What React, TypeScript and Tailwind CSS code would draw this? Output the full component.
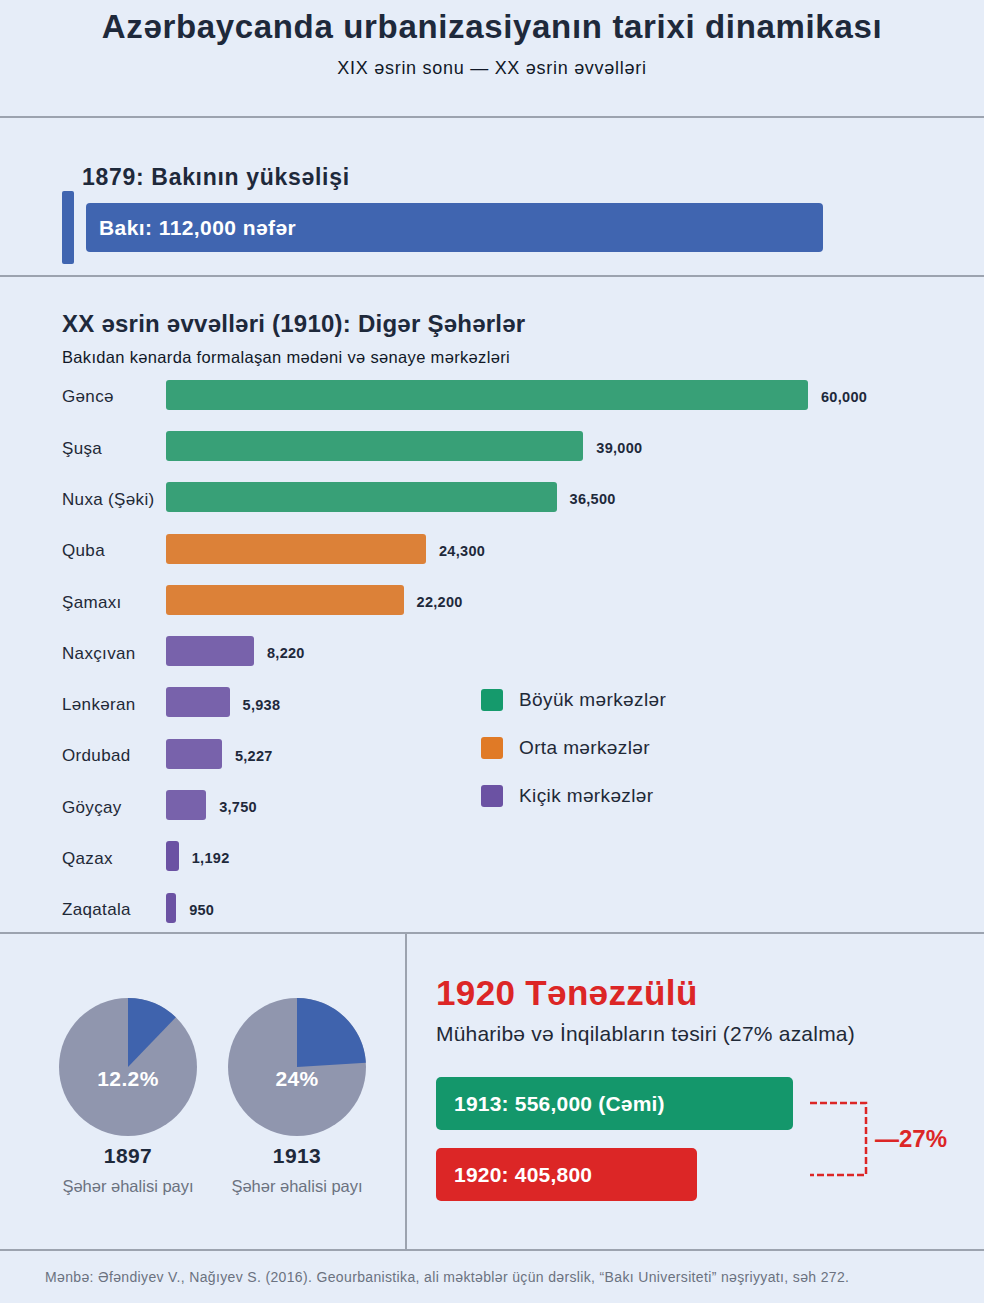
import React from "react";

const cities = [
  { name: "Gəncə", v: 60000, label: "60,000", c: "bg-[#38a077]" },
  { name: "Şuşa", v: 39000, label: "39,000", c: "bg-[#38a077]" },
  { name: "Nuxa (Şəki)", v: 36500, label: "36,500", c: "bg-[#38a077]" },
  { name: "Quba", v: 24300, label: "24,300", c: "bg-[#dc8138]" },
  { name: "Şamaxı", v: 22200, label: "22,200", c: "bg-[#dc8138]" },
  { name: "Naxçıvan", v: 8220, label: "8,220", c: "bg-[#7862ab]" },
  { name: "Lənkəran", v: 5938, label: "5,938", c: "bg-[#7862ab]" },
  { name: "Ordubad", v: 5227, label: "5,227", c: "bg-[#7862ab]" },
  { name: "Göyçay", v: 3750, label: "3,750", c: "bg-[#7862ab]" },
  { name: "Qazax", v: 1192, label: "1,192", c: "bg-[#6b52a3]" },
  { name: "Zaqatala", v: 950, label: "950", c: "bg-[#6b52a3]" },
];

function Pie({ pct, label }: { pct: number; label: string }) {
  const r = 69;
  const a = (pct / 100) * Math.PI * 2;
  const x = r + r * Math.sin(a);
  const y = r - r * Math.cos(a);
  const large = pct > 50 ? 1 : 0;
  return (
    <svg width="138" height="138" viewBox="0 0 138 138">
      <circle cx="69" cy="69" r="69" fill="#9096ae" />
      <path d={`M69 69 L69 0 A69 69 0 ${large} 1 ${x} ${y} Z`} fill="#3f63ad" />
      <text
        x="69"
        y="82"
        textAnchor="middle"
        dominantBaseline="middle"
        fill="#ffffff"
        fontSize="21"
        fontWeight="700"
        letterSpacing="0.4"
        fontFamily="Liberation Sans, Arial, sans-serif"
      >
        {label}
      </text>
    </svg>
  );
}

export default function App() {
  return (
    <div className="w-[984px] min-h-[1303px] bg-[#e6edf8] text-[#1e293b] font-['Liberation_Sans',Arial,sans-serif]">
      {/* Header */}
      <header className="h-[118px] border-b-2 border-[#9ca3af] pt-2 flex flex-col items-center">
        <h1 className="text-[33px] leading-[38px] tracking-[0.02em] font-bold text-[#1e293b]">
          Azərbaycanda urbanizasiyanın tarixi dinamikası
        </h1>
        <p className="mt-[11px] text-[18px] leading-[22px] tracking-[0.04em] text-[#111827]">
          XIX əsrin sonu — XX əsrin əvvəlləri
        </p>
      </header>

      {/* 1879 */}
      <section className="h-[159px] border-b-2 border-[#9ca3af] pt-[46px]">
        <h2 className="pl-[82px] text-[23px] leading-[26px] tracking-[0.03em] font-bold text-[#1e293b]">
          1879: Bakının yüksəlişi
        </h2>
        <div className="mt-[1px] pl-[62px] flex items-center gap-3">
          <div className="w-[12px] h-[73px] rounded-[2px] bg-[#4065b0]" />
          <div className="w-[737px] h-[49px] rounded-[4px] bg-[#4065b0] flex items-center pl-[13px]">
            <span className="text-white font-bold text-[21px] tracking-[0.02em]">Bakı: 112,000 nəfər</span>
          </div>
        </div>
      </section>

      {/* 1910 */}
      <section className="h-[657px] border-b-2 border-[#9ca3af] pt-[33px] pl-[62px]">
        <h2 className="text-[24px] leading-[28px] tracking-[0.01em] font-bold text-[#1e293b]">
          XX əsrin əvvəlləri (1910): Digər Şəhərlər
        </h2>
        <p className="mt-[9px] text-[16.5px] leading-[20px] tracking-[0.02em] text-[#111827]">
          Bakıdan kənarda formalaşan mədəni və sənaye mərkəzləri
        </p>
        <div className="relative mt-[2px]">
          {cities.map((c) => (
            <div key={c.name} className="h-[51.3px] flex items-center">
              <div className="w-[104px] mt-[5px] text-[17px] tracking-[0.02em] text-[#1f2937] whitespace-nowrap">
                {c.name}
              </div>
              <div
                className={`h-[30px] rounded-[3px] ${c.c}`}
                style={{ width: `${(c.v * 642) / 60000}px` }}
              />
              <div className="ml-[13px] mt-[6px] text-[14.5px] tracking-[0.02em] font-bold text-[#1e293b]">
                {c.label}
              </div>
            </div>
          ))}
          <div className="absolute left-[419px] top-[317px] flex flex-col gap-[20px]">
            <div className="flex items-center gap-[16px]">
              <div className="w-[22px] h-[22px] rounded-[3px] bg-[#159a6c]" />
              <span className="text-[19px] leading-[28px] tracking-[0.02em] text-[#1f2937]">Böyük mərkəzlər</span>
            </div>
            <div className="flex items-center gap-[16px]">
              <div className="w-[22px] h-[22px] rounded-[3px] bg-[#e07a26]" />
              <span className="text-[19px] leading-[28px] tracking-[0.02em] text-[#1f2937]">Orta mərkəzlər</span>
            </div>
            <div className="flex items-center gap-[16px]">
              <div className="w-[22px] h-[22px] rounded-[3px] bg-[#6b52a3]" />
              <span className="text-[19px] leading-[28px] tracking-[0.02em] text-[#1f2937]">Kiçik mərkəzlər</span>
            </div>
          </div>
        </div>
      </section>

      {/* Bottom grid */}
      <section className="h-[317px] border-b-2 border-[#9ca3af] flex">
        <div className="w-[407px] border-r-2 border-[#9ca3af] pt-[64px] pl-[59px] flex gap-[31px]">
          {[
            { pct: 12.2, label: "12.2%", year: "1897" },
            { pct: 24, label: "24%", year: "1913" },
          ].map((p) => (
            <div key={p.year} className="w-[138px] flex flex-col items-center">
              <Pie pct={p.pct} label={p.label} />
              <div className="mt-[8px] text-[21px] leading-[24px] tracking-[0.02em] font-bold text-[#1e293b]">{p.year}</div>
              <div className="mt-[8px] text-[16.5px] leading-[20px] text-[#6b7280] whitespace-nowrap">
                Şəhər əhalisi payı
              </div>
            </div>
          ))}
        </div>
        <div className="flex-1 pt-[39px] pl-[29px]">
          <h2 className="text-[35px] leading-[40px] tracking-[0.01em] font-bold text-[#dc2626]">1920 Tənəzzülü</h2>
          <p className="mt-[9px] text-[21px] leading-[24px] tracking-[0.01em] text-[#1f2937]">
            Müharibə və İnqilabların təsiri (27% azalma)
          </p>
          <div className="mt-[31px] flex items-center">
            <div className="flex flex-col gap-[18px]">
              <div className="w-[357px] h-[53px] rounded-[5px] bg-[#14976b] flex items-center pl-[18px]">
                <span className="text-white font-bold text-[21px] tracking-[0.01em]">1913: 556,000 (Cəmi)</span>
              </div>
              <div className="w-[261px] h-[53px] rounded-[5px] bg-[#dc2626] flex items-center pl-[18px]">
                <span className="text-white font-bold text-[21px] tracking-[0.01em]">1920: 405,800</span>
              </div>
            </div>
            <svg className="ml-[17px]" width="58" height="124" viewBox="0 0 58 124">
              <path
                d="M0 26 H56 V98 H0"
                fill="none"
                stroke="#dc2626"
                strokeWidth="2.5"
                strokeDasharray="7 3"
              />
            </svg>
            <span className="ml-[7px] text-[24px] font-bold text-[#dc2626]">—27%</span>
          </div>
        </div>
      </section>

      {/* Footer */}
      <footer className="h-[52px] flex items-center pl-[45px]">
        <p className="text-[14px] tracking-[0.025em] text-[#6b7280] whitespace-nowrap">
          Mənbə: Əfəndiyev V., Nağıyev S. (2016). Geourbanistika, ali məktəblər üçün dərslik, “Bakı Universiteti” nəşriyyatı, səh 272.
        </p>
      </footer>
    </div>
  );
}
